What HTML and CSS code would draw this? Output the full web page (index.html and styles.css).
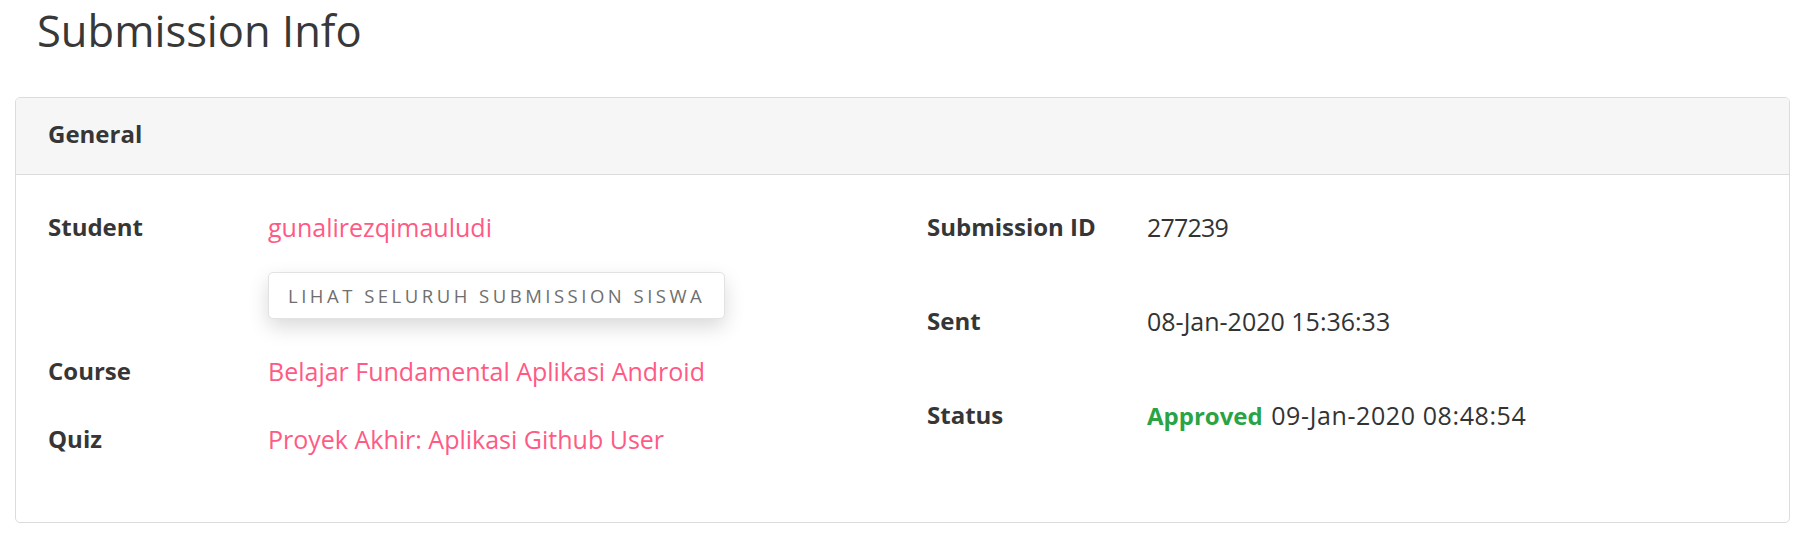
FILE: index.html
```html
<!DOCTYPE html>
<html lang="id">
<head>
<meta charset="utf-8">
<title>Submission Info</title>
<link rel="stylesheet" href="styles.css">
</head>
<body>
<div class="page">
  <h1 class="title">Submission Info</h1>
  <section class="card">
    <header class="card-header">General</header>
    <div class="card-body">
      <div class="col col-left">
        <div class="row">
          <div class="label">Student</div>
          <div class="value value-stack">
            <a class="link" href="#">gunalirezqimauludi</a>
            <button class="btn" type="button">LIHAT SELURUH SUBMISSION SISWA</button>
          </div>
        </div>
        <div class="row">
          <div class="label">Course</div>
          <div class="value"><a class="link" href="#">Belajar Fundamental Aplikasi Android</a></div>
        </div>
        <div class="row">
          <div class="label">Quiz</div>
          <div class="value"><a class="link" href="#">Proyek Akhir: Aplikasi Github User</a></div>
        </div>
      </div>
      <div class="col col-right">
        <div class="row">
          <div class="label">Submission ID</div>
          <div class="value value-id">277239</div>
        </div>
        <div class="row">
          <div class="label">Sent</div>
          <div class="value">08-Jan-2020 15:36:33</div>
        </div>
        <div class="row">
          <div class="label">Status</div>
          <div class="value"><span class="approved">Approved</span> <span class="status-date">09-Jan-2020 08:48:54</span></div>
        </div>
      </div>
    </div>
  </section>
</div>
</body>
</html>
```
FILE: styles.css
```css
* { box-sizing: border-box; }

body {
  margin: 0;
  background: #ffffff;
  font-family: "Open Sans", "Noto Sans", sans-serif;
  color: #333333;
}

.page {
  padding: 0 28px 0 15px;
}

.title {
  margin: 0;
  padding: 2px 0 0 22px;
  font-size: 43.5px;
  font-weight: 400;
  line-height: 58px;
  color: #383838;
}

.card {
  margin-top: 37px;
  border: 1px solid #dcdcdc;
  border-radius: 5px;
  overflow: hidden;
  background: #ffffff;
}

.card-header {
  padding: 22px 32px 26px;
  background: #f6f6f6;
  border-bottom: 1px solid #dcdcdc;
  font-size: 24px;
  font-weight: 700;
  line-height: 28px;
  color: #363636;
}

.card-body {
  display: grid;
  grid-template-columns: 879px 1fr;
  padding: 36px 32px 67px;
}

.col {
  display: flex;
  flex-direction: column;
}

.col-left { gap: 36px; }
.col-right { gap: 62px; }

.row {
  display: grid;
  grid-template-columns: 220px 1fr;
  align-items: start;
}

.label {
  font-size: 24px;
  font-weight: 700;
  line-height: 32px;
  color: #363636;
}

.value {
  font-size: 25px;
  font-weight: 400;
  line-height: 32px;
  color: #333333;
}

.value-id {
  letter-spacing: -0.8px;
}

.status-date {
  margin-left: 2px;
  letter-spacing: 0.6px;
}

.value-stack {
  display: flex;
  flex-direction: column;
  align-items: flex-start;
}

.link {
  color: #ff5a85;
  text-decoration: none;
}

.approved {
  font-size: 24px;
  font-weight: 700;
  color: #2aa345;
}

.btn {
  margin-top: 29px;
  height: 47px;
  padding: 0 19px;
  background: #ffffff;
  border: 1px solid #e2e2e2;
  border-radius: 5px;
  box-shadow: 0 8px 20px rgba(0, 0, 0, 0.15);
  font-family: "Open Sans", "Noto Sans", sans-serif;
  font-size: 18.5px;
  font-weight: 400;
  line-height: 45px;
  letter-spacing: 3.5px;
  color: #6f6f6f;
  cursor: pointer;
}
```
